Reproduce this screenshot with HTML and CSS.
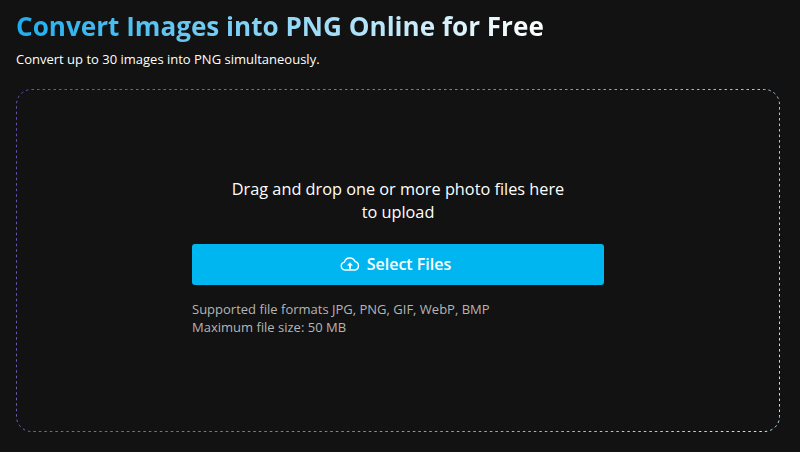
FILE: index.html
```
<!DOCTYPE html>
<html lang="en">
<head>
    <meta charset="UTF-8">
    <title>Convert Images into PNG Online for Free</title>
    <link rel="stylesheet" href="styles.css">
</head>
<body>
    <h1 class="title">Convert Images into PNG Online for Free</h1>
    <p class="subtitle">Convert up to 30 images into PNG simultaneously.</p>

    <div class="dropzone">
        <!-- dashed border with a gradient, css borders can't do that -->
        <svg class="dropzone-border" width="764" height="343" viewBox="0 0 764 343">
            <defs>
                <linearGradient id="borderGrad" gradientUnits="userSpaceOnUse" x1="0" y1="0" x2="764" y2="343">
                    <stop offset="0" stop-color="#6a4fb0"/>
                    <stop offset="0.5" stop-color="#7484bd"/>
                    <stop offset="1" stop-color="#c4eef5"/>
                </linearGradient>
            </defs>
            <rect x="0.5" y="0.5" width="763" height="342" rx="15" ry="15" fill="none" stroke="url(#borderGrad)" stroke-width="1" stroke-dasharray="2.5 3"/>
        </svg>
        <div class="upload">
            <p class="upload-text">Drag and drop one or more photo files here<br>to upload</p>
            <button class="select-btn">
                <svg class="cloud" width="20" height="14" viewBox="0 0 20 14">
                    <path d="M5 13a4 4 0 0 1-.6-7.900A5.600 5.600 0 0 1 15 4.600 4.300 4.300 0 0 1 15.200 13Z" fill="none" stroke="#fff" stroke-width="1.4" stroke-linejoin="round"/>
                    <path d="M10 5.200l3 3.200h-2v3.400H9V8.400H7z" fill="#fff"/>
                </svg>
                Select Files
            </button>
            <p class="upload-info">Supported file formats JPG, PNG, GIF, WebP, BMP<br>Maximum file size: 50 MB</p>
        </div>
    </div>
</body>
</html>
```

FILE: styles.css
```
body {
    margin: 0;
    height: 452px;
    overflow: hidden;
    padding: 0 20px 0 16px;
    box-sizing: border-box;
    background: #121212;
    color: #fff;
    font-family: "Open Sans", "Noto Sans", sans-serif;
}

.title {
    width: fit-content;
    margin: 8px 0 0;
    font-size: 26.1px;
    line-height: 36px;
    font-weight: 700;
    background: linear-gradient(90deg, #1eaeee, #fff);
    -webkit-background-clip: text;
    background-clip: text;
    color: transparent;
}

.subtitle {
    margin: 6px 0 0;
    font-size: 13px;
    line-height: 18px;
}

.dropzone {
    position: relative;
    height: 343px;
    margin-top: 21px;
    padding-bottom: 8px;
    box-sizing: border-box;
    display: flex;
    justify-content: center;
    align-items: center;
}

.dropzone-border {
    position: absolute;
    top: 0;
    left: 0;
}

.upload {
    width: 412px;
}

.upload-text {
    margin: 1px 0 20px;
    font-size: 16.3px;
    line-height: 23px;
    text-align: center;
}

.select-btn {
    width: 100%;
    height: 41px;
    padding: 0 5px 2px 0;
    display: flex;
    justify-content: center;
    align-items: center;
    gap: 7px;
    border: 0;
    border-radius: 3px;
    background: #00b6f0;
    color: #fff;
    font-family: inherit;
    font-size: 16px;
    font-weight: 600;
}

.upload-info {
    margin: 15px 0 0;
    font-size: 13px;
    line-height: 18px;
    color: #b5b5b5;
}
```
